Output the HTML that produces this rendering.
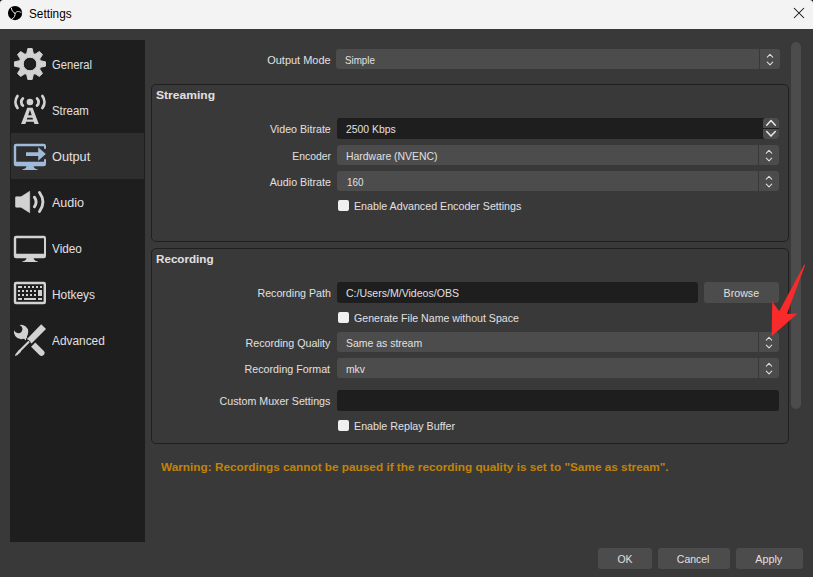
<!DOCTYPE html>
<html><head><meta charset="utf-8"><title>Settings</title>
<style>
html,body{margin:0;padding:0;}
body{width:813px;height:577px;overflow:hidden;background:#3a393a;position:relative;font-family:"Liberation Sans",sans-serif;font-size:11px;color:#e1e0e1;}
.abs{position:absolute;}
.t{position:absolute;white-space:nowrap;}
.combo{background:#4c4c4c;border-radius:3px;}
.combo .sep{position:absolute;right:20px;top:0;width:1px;height:100%;background:#393839;}
.edit{background:#1f1e1f;border-radius:3px;}
.group{border:1px solid #212021;border-radius:5px;box-sizing:border-box;}
.cb{left:338px;width:11px;height:11px;background:#f0f0f0;border-radius:2px;}
.btn{background:#4c4c4c;border-radius:3px;}
</style></head><body>
<div class="abs" style="left:0;top:0;width:813px;height:29px;background:#f3f3f3"></div>
<svg class="abs" style="left:0;top:0" width="813" height="8" viewBox="0 0 813 8"><path d="M0 0 H3.2 A3.2 3.2 0 0 0 0 3.2 Z" fill="#000"/><path d="M813 0 H809.8 A3.2 3.2 0 0 1 813 3.2 Z" fill="#000"/></svg>
<svg class="abs" style="left:3px;top:1px" width="24" height="24" viewBox="0 0 24 24"><circle cx="12.06" cy="12.06" r="7.15" fill="#000"/><g fill="none" stroke="#e6e6e6" stroke-width="1.0" stroke-linecap="round"><path d="M12.06 12.27 C10.5 11.5 8.6 10.2 8.4 7.2"/><path d="M12.06 12.27 C13.5 10.3 15.6 9.6 18.2 11.7"/><path d="M12.06 12.27 C12.4 14.5 11.5 16.6 9.3 17.8"/></g></svg>
<svg class="abs" style="left:792px;top:6px" width="14" height="14" viewBox="0 0 14 14"><path d="M2 2 L12 12 M12 2 L2 12" stroke="#111" stroke-width="1.05" fill="none"/></svg>

<div class="abs" style="left:10px;top:40px;width:135px;height:502px;background:#1f1e1f"></div>
<div class="abs" style="left:11px;top:133px;width:133px;height:46px;background:#2f2e2f"></div>
<svg class="abs" style="left:10px;top:44px;color:#d2d2d2" width="40" height="40" viewBox="0 0 40 40" fill="#d2d2d2"><path d="M16.72 9.60 L17.83 4.55 L22.17 4.55 L23.28 9.60 L25.03 10.33 L29.39 7.54 L32.46 10.61 L29.67 14.97 L30.40 16.72 L35.45 17.83 L35.45 22.17 L30.40 23.28 L29.67 25.03 L32.46 29.39 L29.39 32.46 L25.03 29.67 L23.28 30.40 L22.17 35.45 L17.83 35.45 L16.72 30.40 L14.97 29.67 L10.61 32.46 L7.54 29.39 L10.33 25.03 L9.60 23.28 L4.55 22.17 L4.55 17.83 L9.60 16.72 L10.33 14.97 L7.54 10.61 L10.61 7.54 L14.97 10.33 Z M13.2 20 a6.8 6.8 0 1 0 13.6 0 a6.8 6.8 0 1 0 -13.6 0 Z" fill-rule="evenodd" stroke-linejoin="round" stroke-width="1.0" stroke="currentColor"/></svg>
<svg class="abs" style="left:10px;top:90px;color:#d2d2d2" width="40" height="40" viewBox="0 0 40 40" fill="#d2d2d2"><circle cx="19.94" cy="11.96" r="3.3"/><g fill="none" stroke="currentColor" stroke-width="2.8" stroke-linecap="round"><path d="M7.5 6 A10 10 0 0 0 7.5 18"/><path d="M32.4 6 A10 10 0 0 1 32.4 18"/><path d="M12.85 8.4 A4.95 4.95 0 0 0 12.85 15.6"/><path d="M27.05 8.4 A4.95 4.95 0 0 1 27.05 15.6"/></g><path fill-rule="evenodd" d="M17.3 17.76 H22.6 L28.8 33.9 H24.4 L23.6 31.7 H16.3 L15.3 33.9 H11.1 Z M19.95 19.8 L18.2 25.3 H21.7 Z M17.4 27.7 L16.8 29.5 H23 L22.5 27.7 Z"/></svg>
<svg class="abs" style="left:10px;top:136px;color:#a0bbd9" width="40" height="40" viewBox="0 0 40 40" fill="#a0bbd9"><path fill-rule="evenodd" d="M6 7.8 H33.8 A2.2 2.2 0 0 1 36 10 V28 A2.2 2.2 0 0 1 33.8 30.2 H6 A2.2 2.2 0 0 1 3.8 28 V10 A2.2 2.2 0 0 1 6 7.8 Z M6.2 10.2 V25.7 H34 V10.2 Z"/><path d="M16.6 30 H23.6 C23.9 32 25 33 27.8 33.6 V34 H12.2 V33.6 C15 33 16.3 32 16.6 30 Z"/><rect x="33" y="12.8" width="4" height="10.4" fill="#2f2e2f"/><path d="M16 16.2 H28.2 V11.2 L35.8 18 L28.2 24.8 V20 H16 Z"/></svg>
<svg class="abs" style="left:10px;top:182px;color:#d2d2d2" width="40" height="40" viewBox="0 0 40 40" fill="#d2d2d2"><path d="M6.1 14.8 H11 L19.7 9.3 V30.7 L11 25.2 H6.1 A0.6 0.6 0 0 1 5.5 24.6 V15.4 A0.6 0.6 0 0 1 6.1 14.8 Z" stroke="currentColor" stroke-width="0.6" stroke-linejoin="round"/><g fill="none" stroke="currentColor" stroke-width="2.9" stroke-linecap="round"><path d="M24.4 15.2 Q27.8 20 24.4 24.8"/><path d="M29.5 10.5 Q36.4 20 29.5 29.5"/></g></svg>
<svg class="abs" style="left:10px;top:228px;color:#d2d2d2" width="40" height="40" viewBox="0 0 40 40" fill="#d2d2d2"><path fill-rule="evenodd" d="M6 7.8 H33.8 A2.2 2.2 0 0 1 36 10 V28 A2.2 2.2 0 0 1 33.8 30.2 H6 A2.2 2.2 0 0 1 3.8 28 V10 A2.2 2.2 0 0 1 6 7.8 Z M6.2 10.2 V25.7 H34 V10.2 Z"/><path d="M16.6 30 H23.6 C23.9 32 25 33 27.8 33.6 V34 H12.2 V33.6 C15 33 16.3 32 16.6 30 Z"/></svg>
<svg class="abs" style="left:10px;top:274px;color:#d2d2d2" width="40" height="40" viewBox="0 0 40 40" fill="#d2d2d2"><path fill-rule="evenodd" d="M6 7.8 H33.8 A2.2 2.2 0 0 1 36 10 V28 A2.2 2.2 0 0 1 33.8 30.2 H6 A2.2 2.2 0 0 1 3.8 28 V10 A2.2 2.2 0 0 1 6 7.8 Z M6.2 10.2 V27.8 H33.6 V10.2 Z"/><rect x="8" y="12" width="4" height="2"/><rect x="14" y="12" width="2" height="2"/><rect x="18" y="12" width="2" height="2"/><rect x="22" y="12" width="2" height="2"/><rect x="26" y="12" width="2" height="2"/><rect x="30" y="12" width="2" height="2"/><rect x="8" y="16" width="2" height="2"/><rect x="8" y="20" width="2" height="2"/><rect x="12" y="16" width="2" height="2"/><rect x="12" y="20" width="2" height="2"/><rect x="16" y="16" width="2" height="2"/><rect x="16" y="20" width="2" height="2"/><rect x="20" y="16" width="2" height="2"/><rect x="20" y="20" width="2" height="2"/><rect x="24" y="16" width="2" height="2"/><rect x="24" y="20" width="2" height="2"/><rect x="28" y="16" width="4" height="6"/><rect x="8" y="24" width="4" height="2"/><rect x="14" y="24" width="12" height="2"/><rect x="28" y="24" width="4" height="2"/></svg>
<svg class="abs" style="left:10px;top:320px;color:#d2d2d2" width="40" height="40" viewBox="0 0 40 40" fill="#d2d2d2"><path d="M25.3 22.5 L33.6 30.8 A2.95 2.95 0 0 1 29.4 35 L21.1 26.7 Z"/><path fill-rule="evenodd" d="M9.6 4.9 A7.2 7.2 0 1 1 4.1 10.2 A4.5 4.5 0 0 0 11.4 12 A4.5 4.5 0 0 0 9.6 4.9 Z"/><path d="M13 17 L16.2 14.4 L17.2 17.4 L15.4 20.4 Z"/><path d="M31.2 4.2 L36 9 L21.5 23.6 L17 19.1 Z" stroke="#1f1e1f" stroke-width="1.6" paint-order="stroke"/><path d="M18.3 20.7 L19.9 22.3 L9.9 32.3 L8.3 30.7 Z" stroke="#1f1e1f" stroke-width="1.2" paint-order="stroke"/><path d="M9.2 29.8 L11.1 31.7 L7.2 35.2 L4.8 36.1 L5.7 33.7 Z"/></svg>

<div class="abs combo" style="left:336px;top:49px;width:444px;height:20px"><div class="sep"></div><svg class="abs" style="right:0;top:0" width="20" height="20" viewBox="0 0 20 20"><path d="M7.3 8.05 L10.0 5.35 L12.7 8.05" fill="none" stroke="#dcdcdc" stroke-width="1.1" stroke-linecap="round" stroke-linejoin="round"/><path d="M7.3 13.15 L10.0 15.85 L12.7 13.15" fill="none" stroke="#dcdcdc" stroke-width="1.1" stroke-linecap="round" stroke-linejoin="round"/></svg></div>

<div class="abs group" style="left:151px;top:84px;width:638px;height:158px"></div>
<div class="abs edit" style="left:337px;top:118px;width:442px;height:21px"></div>
<div class="abs" style="left:763px;top:118px;width:16px;height:10px;background:#4c4c4c;border-radius:3px 3px 0 0"></div>
<div class="abs" style="left:763px;top:129px;width:16px;height:10px;background:#4c4c4c;border-radius:0 0 3px 3px"></div>
<svg class="abs" style="left:763px;top:118px" width="16" height="21" viewBox="0 0 16 21"><path d="M3.7 7.2 L8 2.6000000000000005 L12.3 7.2" fill="none" stroke="#e8e8e8" stroke-width="1.5" stroke-linecap="round" stroke-linejoin="round"/><path d="M3.7 13.5 L8 18.1 L12.3 13.5" fill="none" stroke="#e8e8e8" stroke-width="1.5" stroke-linecap="round" stroke-linejoin="round"/></svg>
<div class="abs combo" style="left:337px;top:145px;width:442px;height:20px"><div class="sep"></div><svg class="abs" style="right:0;top:0" width="20" height="20" viewBox="0 0 20 20"><path d="M7.3 8.05 L10.0 5.35 L12.7 8.05" fill="none" stroke="#dcdcdc" stroke-width="1.1" stroke-linecap="round" stroke-linejoin="round"/><path d="M7.3 13.15 L10.0 15.85 L12.7 13.15" fill="none" stroke="#dcdcdc" stroke-width="1.1" stroke-linecap="round" stroke-linejoin="round"/></svg></div>
<div class="abs combo" style="left:337px;top:171px;width:442px;height:20px"><div class="sep"></div><svg class="abs" style="right:0;top:0" width="20" height="20" viewBox="0 0 20 20"><path d="M7.3 8.05 L10.0 5.35 L12.7 8.05" fill="none" stroke="#dcdcdc" stroke-width="1.1" stroke-linecap="round" stroke-linejoin="round"/><path d="M7.3 13.15 L10.0 15.85 L12.7 13.15" fill="none" stroke="#dcdcdc" stroke-width="1.1" stroke-linecap="round" stroke-linejoin="round"/></svg></div>
<div class="abs cb" style="top:200px"></div>

<div class="abs group" style="left:151px;top:248px;width:638px;height:196px"></div>
<div class="abs edit" style="left:337px;top:282px;width:361px;height:21px"></div>
<div class="abs btn" style="left:704px;top:282px;width:75px;height:21px"></div>
<div class="abs cb" style="top:312px"></div>
<div class="abs combo" style="left:337px;top:332px;width:442px;height:20px"><div class="sep"></div><svg class="abs" style="right:0;top:0" width="20" height="20" viewBox="0 0 20 20"><path d="M7.3 8.05 L10.0 5.35 L12.7 8.05" fill="none" stroke="#dcdcdc" stroke-width="1.1" stroke-linecap="round" stroke-linejoin="round"/><path d="M7.3 13.15 L10.0 15.85 L12.7 13.15" fill="none" stroke="#dcdcdc" stroke-width="1.1" stroke-linecap="round" stroke-linejoin="round"/></svg></div>
<div class="abs combo" style="left:337px;top:358px;width:442px;height:20px"><div class="sep"></div><svg class="abs" style="right:0;top:0" width="20" height="20" viewBox="0 0 20 20"><path d="M7.3 8.05 L10.0 5.35 L12.7 8.05" fill="none" stroke="#dcdcdc" stroke-width="1.1" stroke-linecap="round" stroke-linejoin="round"/><path d="M7.3 13.15 L10.0 15.85 L12.7 13.15" fill="none" stroke="#dcdcdc" stroke-width="1.1" stroke-linecap="round" stroke-linejoin="round"/></svg></div>
<div class="abs edit" style="left:337px;top:390px;width:442px;height:21px"></div>
<div class="abs cb" style="top:420px"></div>

<div class="abs" style="left:791px;top:42px;width:10px;height:367px;background:#4c4c4c;border-radius:5px"></div>

<div class="abs btn" style="left:598px;top:548px;width:54px;height:21px"></div>
<div class="abs btn" style="left:658px;top:548px;width:72px;height:21px"></div>
<div class="abs btn" style="left:736px;top:548px;width:67px;height:21px"></div>

<div class="t" style="left:28.77px;top:6px;font-size:12px;line-height:16px;color:#000;transform:scaleX(0.9825);transform-origin:0 50%">Settings</div>
<div class="t" style="left:51.70px;top:57px;font-size:12px;line-height:16px;color:#e1e0e1;transform:scaleX(0.9344);transform-origin:0 50%">General</div>
<div class="t" style="left:51.69px;top:103px;font-size:12px;line-height:16px;color:#e1e0e1;transform:scaleX(0.9512);transform-origin:0 50%">Stream</div>
<div class="t" style="left:51.63px;top:149px;font-size:12px;line-height:16px;color:#e1e0e1;transform:scaleX(1.0602);transform-origin:0 50%">Output</div>
<div class="t" style="left:52.24px;top:195px;font-size:12px;line-height:16px;color:#e1e0e1;transform:scaleX(1.0455);transform-origin:0 50%">Audio</div>
<div class="t" style="left:52.47px;top:241px;font-size:12px;line-height:16px;color:#e1e0e1;transform:scaleX(0.9808);transform-origin:0 50%">Video</div>
<div class="t" style="left:51.66px;top:287px;font-size:12px;line-height:16px;color:#e1e0e1;transform:scaleX(0.9917);transform-origin:0 50%">Hotkeys</div>
<div class="t" style="left:52.27px;top:333px;font-size:12px;line-height:16px;color:#e1e0e1;transform:scaleX(0.9892);transform-origin:0 50%">Advanced</div>
<div class="t" style="right:482.91px;top:53px;font-size:11px;line-height:14px;color:#e1e0e1;transform:scaleX(0.9962);transform-origin:100% 50%">Output Mode</div>
<div class="t" style="left:345.16px;top:53px;font-size:11px;line-height:14px;color:#e1e0e1;transform:scaleX(0.8907);transform-origin:0 50%">Simple</div>
<div class="t" style="left:156.26px;top:88px;font-size:11.5px;line-height:14px;color:#e1e0e1;transform:scaleX(1.0502);transform-origin:0 50%;font-weight:bold">Streaming</div>
<div class="t" style="right:482.52px;top:122px;font-size:11px;line-height:14px;color:#e1e0e1;transform:scaleX(0.9690);transform-origin:100% 50%">Video Bitrate</div>
<div class="t" style="left:345.83px;top:122px;font-size:11px;line-height:14px;color:#e1e0e1;transform:scaleX(0.9456);transform-origin:0 50%">2500 Kbps</div>
<div class="t" style="right:482.53px;top:149px;font-size:11px;line-height:14px;color:#e1e0e1;transform:scaleX(0.9430);transform-origin:100% 50%">Encoder</div>
<div class="t" style="left:345.83px;top:149px;font-size:11px;line-height:14px;color:#e1e0e1;transform:scaleX(0.9479);transform-origin:0 50%">Hardware (NVENC)</div>
<div class="t" style="right:482.52px;top:175px;font-size:11px;line-height:14px;color:#e1e0e1;transform:scaleX(0.9725);transform-origin:100% 50%">Audio Bitrate</div>
<div class="t" style="left:346.75px;top:175px;font-size:11px;line-height:14px;color:#e1e0e1;transform:scaleX(0.9014);transform-origin:0 50%">160</div>
<div class="t" style="left:353.92px;top:199px;font-size:11px;line-height:14px;color:#e1e0e1;transform:scaleX(0.9703);transform-origin:0 50%">Enable Advanced Encoder Settings</div>
<div class="t" style="left:156.48px;top:252px;font-size:11.5px;line-height:14px;color:#e1e0e1;transform:scaleX(1.0123);transform-origin:0 50%;font-weight:bold">Recording</div>
<div class="t" style="right:482.52px;top:286px;font-size:11px;line-height:14px;color:#e1e0e1;transform:scaleX(0.9673);transform-origin:100% 50%">Recording Path</div>
<div class="t" style="left:345.53px;top:286px;font-size:11px;line-height:14px;color:#e1e0e1;transform:scaleX(0.9590);transform-origin:0 50%">C:/Users/M/Videos/OBS</div>
<div class="t" style="left:722.66px;top:286px;font-size:11px;line-height:14px;color:#e1e0e1;transform:scaleX(0.9663);transform-origin:50% 50%">Browse</div>
<div class="t" style="left:353.92px;top:311px;font-size:11px;line-height:14px;color:#e1e0e1;transform:scaleX(0.9629);transform-origin:0 50%">Generate File Name without Space</div>
<div class="t" style="right:482.72px;top:336px;font-size:11px;line-height:14px;color:#e1e0e1;transform:scaleX(0.9716);transform-origin:100% 50%">Recording Quality</div>
<div class="t" style="left:346.03px;top:336px;font-size:11px;line-height:14px;color:#e1e0e1;transform:scaleX(0.9508);transform-origin:0 50%">Same as stream</div>
<div class="t" style="right:482.52px;top:362px;font-size:11px;line-height:14px;color:#e1e0e1;transform:scaleX(0.9705);transform-origin:100% 50%">Recording Format</div>
<div class="t" style="left:346.23px;top:362px;font-size:11px;line-height:14px;color:#e1e0e1;transform:scaleX(0.9394);transform-origin:0 50%">mkv</div>
<div class="t" style="right:482.42px;top:394px;font-size:11px;line-height:14px;color:#e1e0e1;transform:scaleX(0.9687);transform-origin:100% 50%">Custom Muxer Settings</div>
<div class="t" style="left:353.92px;top:419px;font-size:11px;line-height:14px;color:#e1e0e1;transform:scaleX(0.9729);transform-origin:0 50%">Enable Replay Buffer</div>
<div class="t" style="left:161.27px;top:460px;font-size:11.5px;line-height:14px;color:#c08408;transform:scaleX(1.0244);transform-origin:0 50%;font-weight:bold">Warning: Recordings cannot be paused if the recording quality is set to &quot;Same as stream&quot;.</div>
<div class="t" style="left:616.95px;top:552px;font-size:11px;line-height:14px;color:#e1e0e1;transform:scaleX(0.9462);transform-origin:50% 50%">OK</div>
<div class="t" style="left:676.48px;top:552px;font-size:11px;line-height:14px;color:#e1e0e1;transform:scaleX(0.9504);transform-origin:50% 50%">Cancel</div>
<div class="t" style="left:755.43px;top:552px;font-size:11px;line-height:14px;color:#e1e0e1;transform:scaleX(0.9789);transform-origin:50% 50%">Apply</div>

<svg class="abs" style="left:760px;top:255px" width="53" height="90" viewBox="760 255 53 90"><path d="M804.3 264.4 L779.2 311.2 L772.2 301.6 L771.7 336.3 L797.6 313.4 L786.9 314 L805.2 265 Z" fill="#f92a2a"/></svg>
</body></html>
